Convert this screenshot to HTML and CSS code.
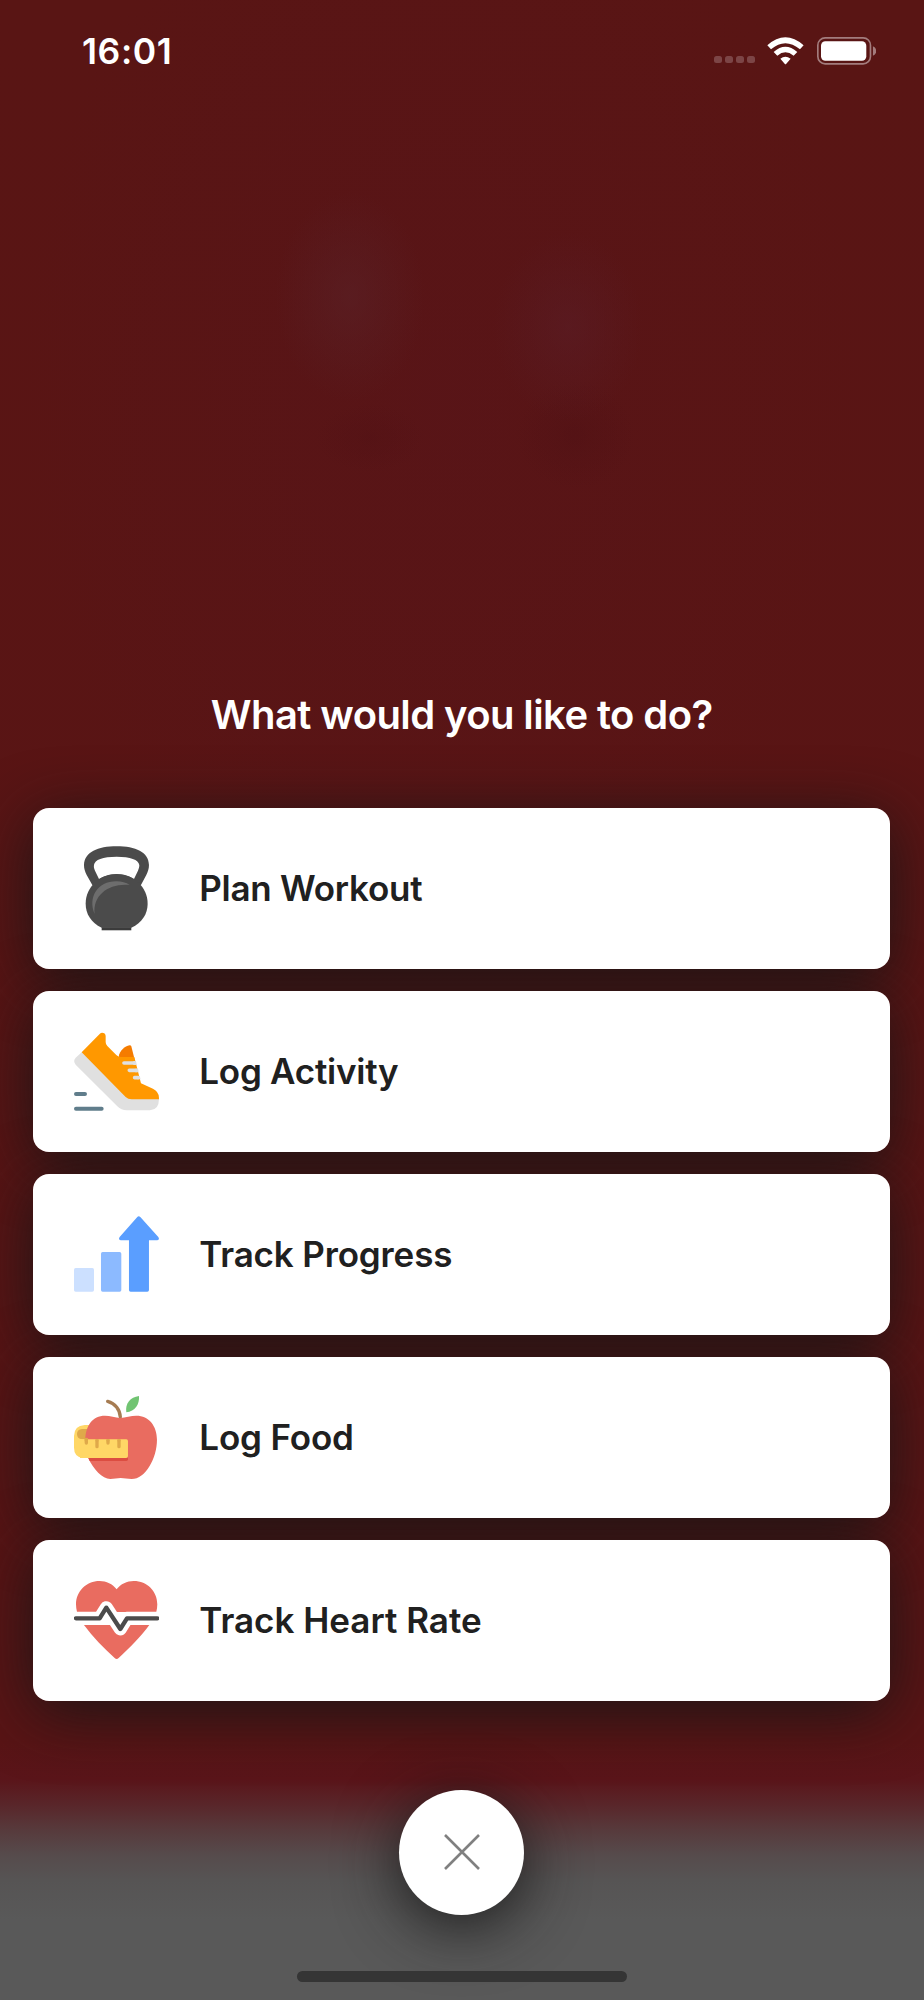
FILE: index.html
```
<!DOCTYPE html>
<html lang="en">
<head>
    <meta charset="UTF-8">
    <meta name="viewport" content="width=device-width, initial-scale=1.0">
    <title>What would you like to do?</title>
    <link rel="stylesheet" href="styles.css">
</head>
<body>
    <div class="screen">
        <header class="status-bar">
            <span class="time">16:01</span>
            <div class="status-icons">
                <div class="signal"><i></i><i></i><i></i><i></i></div>
                <svg class="wifi" viewBox="202 49 112 83">
                    <path fill="#fff" d="M203 74Q257 26 312 74L301 86Q257 49 214 86ZM222 94Q257 63 293 94L282 105Q257 84 233 105ZM242 114Q257 102 273 114L260 129Q257 132 255 129Z"/>
                </svg>
                <svg class="battery" viewBox="350 49 178 83">
                    <rect x="352.5" y="51.5" width="158" height="78" rx="22" fill="none" stroke="#a37c7d" stroke-width="5"/>
                    <rect x="362" y="62" width="136" height="58" rx="13" fill="#fff"/>
                    <path fill="#a37c7d" d="M518 77Q528 81 528 91Q528 101 518 105Z"/>
                </svg>
            </div>
        </header>

        <main class="menu">
            <h1 class="title">What would you like to do?</h1>
            <ul class="actions">
                <li class="card">
                    <svg class="icon" viewBox="42 47 256 256">
                        <path fill="#4b4b4b" fill-rule="evenodd" d="M97 164L80 134C75 124 72 115 72 104C74 65 113 48 170 48C227 48 266 65 267 104C267 115 264 124 259 134L243 164ZM117 146L105 121C102 114 101 110 102 104C104 88 128 79 170 79C211 79 236 88 238 104C238 110 237 114 234 121L222 146Q170 118 117 146Z"/>
                        <path fill="#4b4b4b" d="M170 131C221 131 263 170 263 220C263 250 247 277 214 292H125C93 277 77 250 77 220C77 170 119 131 170 131Z"/>
                        <path fill="#3b3b3b" d="M125 291H214V300H125Z"/>
                        <path fill="#6d6d6d" d="M104 251C83 202 112 153 169 153Q193 153 209 164C148 158 98 193 104 251Z"/>
                    </svg>
                    <span class="label plan">Plan Workout</span>
                </li>
                <li class="card">
                    <svg class="icon" viewBox="42 41 256 256">
                        <path fill="#e0e0e0" d="M65 111L47 127Q38 137 47 148L172 273Q184 285 200 285H270Q297 284 297 251L210 242Z"/>
                        <path fill="#f57c00" d="M176 124C180 105 194 93 209 90Q213 90 214 93L226 140Z"/>
                        <path fill="#ff9800" d="M65 111L119 56Q125 49 133 54Q137 57 137 62V80Q137 87 142 92L169 119Q175 125 182 125H223L243 204L279 220Q297 229 297 247V252H215Q204 252 197 245Z"/>
                        <path fill="none" stroke="#e0e0e0" stroke-width="11" stroke-linecap="round" d="M192 143H224M208 165H230M224 187H235"/>
                        <path fill="#e0e0e0" d="M220 137H227L230 149H220ZM226 160H233L236 171H226ZM232 182H239L242 192H232Z"/>
                        <path fill="none" stroke="#607d8b" stroke-width="12" stroke-linecap="round" d="M48 236H75M48 280H125"/>
                    </svg>
                    <span class="label activity">Log Activity</span>
                </li>
                <li class="card">
                    <svg class="icon" viewBox="42 36 256 256">
                        <rect x="42" y="204" width="60" height="71" rx="5" fill="#cce0ff"/>
                        <rect x="123" y="156" width="61" height="119" rx="5" fill="#8cbaff"/>
                        <path fill="#5a9eff" d="M232 51Q236 47 241 51L295 111Q300 119 292 121H267V270Q267 275 262 275H212Q207 275 207 270V121H182Q174 119 179 111Z"/>
                    </svg>
                    <span class="label progress">Track Progress</span>
                </li>
                <li class="card">
                    <svg class="icon" viewBox="42 45 256 256">
                        <path fill="#ffd766" d="M74 135H110V234H70Q42 232 42 203V168Q42 137 74 135Z"/>
                        <path fill="#dfa94a" d="M66 147H110V178H66Q51 176 51 162Q51 149 66 147Z"/>
                        <path fill="none" stroke="#a67c52" stroke-width="10" stroke-linecap="round" d="M143 64C166 70 180 89 181 111"/>
                        <path fill="#71c472" d="M199 97C195 71 211 51 237 48C239 74 225 94 199 97Z"/>
                        <path fill="#e96c60" d="M181 114C196 113 213 107 229 107C267 107 291 138 291 179C291 234 257 297 215 297C203 297 193 294 182 294C172 294 162 297 151 297C127 297 100 268 85 234L76 178C77 138 97 107 135 107C150 107 166 113 181 114Z"/>
                        <path fill="#dc4d41" d="M84 232H204V238Q204 243 199 243H89Z"/>
                        <path fill="#ffd766" d="M60 178H199Q204 178 204 183V228Q204 234 198 234H60Z"/>
                        <path fill="none" stroke="#dfa94a" stroke-width="10" stroke-linecap="round" d="M79 178V189M111 183V200M144 183V189M177 183V200"/>
                        <path fill="#dfa94a" d="M74 174H84V184H74ZM106 178H116V184H106ZM139 178H149V184H139ZM172 178H182V184H172Z"/>
                    </svg>
                    <span class="label food">Log Food</span>
                </li>
                <li class="card">
                    <svg class="icon" viewBox="42 39 256 256">
                        <path fill="#e96c60" d="M170 73C182 57 201 48 221 48C262 48 292 79 292 118Q292 128 289 141H51Q48 128 48 118C48 79 79 48 119 48C139 48 158 57 170 73ZM72 180H268C244 213 208 250 176 279Q170 285 164 279C131 249 98 216 72 180Z"/>
                        <path fill="none" stroke="#fff" stroke-width="39" stroke-linejoin="round" d="M48 160H119L139 128L181 192L201 160H292"/>
                        <path fill="none" stroke="#4b4b4b" stroke-width="13" stroke-linecap="round" stroke-linejoin="round" d="M48 160H119L139 128L181 192L201 160H292"/>
                    </svg>
                    <span class="label">Track Heart Rate</span>
                </li>
            </ul>
            <button class="close-btn" type="button" aria-label="Close">
                <svg viewBox="0 0 36 36">
                    <path fill="none" stroke="#808080" stroke-width="2.6" d="M1 1L35 35M35 1L1 35"/>
                </svg>
            </button>
        </main>

        <div class="home-indicator"></div>
    </div>
</body>
</html>
```

FILE: styles.css
```
* {
    margin: 0;
    padding: 0;
    box-sizing: border-box;
}

body {
    font-family: Inter, "Liberation Sans", sans-serif;
    background: #591416;
}

.screen {
    display: flex;
    flex-direction: column;
    align-items: center;
    width: 924px;
    height: 2000px;
    overflow: hidden;
    background:
        radial-gradient(ellipse 75px 105px at 350px 297px, rgba(90, 34, 40, 0.55), transparent),
        radial-gradient(ellipse 75px 95px at 568px 327px, rgba(90, 30, 40, 0.5), transparent),
        radial-gradient(ellipse 60px 55px at 575px 435px, rgba(78, 16, 20, 0.4), transparent),
        radial-gradient(ellipse 55px 35px at 370px 438px, rgba(80, 16, 20, 0.35), transparent),
        radial-gradient(ellipse 420px 600px at 440px 400px, rgba(88, 20, 26, 0.5), transparent),
        linear-gradient(#591514 0, #591415 1740px, #5a151a 1780px, #59262a 1805px, #573a3c 1830px, #564b4c 1855px, #565454 1880px, #595959 1920px, #595959 2000px);
}

.status-bar {
    display: flex;
    justify-content: space-between;
    align-items: center;
    width: 100%;
    height: 102px;
    padding: 0 48px 0 82px;
}

.time {
    font-size: 35.5px;
    font-weight: 600;
    letter-spacing: 0.6px;
    color: #fff;
}

.status-icons {
    display: flex;
    align-items: center;
}

.signal {
    display: flex;
    gap: 3px;
    margin: 17px 12px 0 0;
}

.signal i {
    width: 8px;
    height: 7px;
    border-radius: 2.5px;
    background: #7c4546;
}

.wifi {
    width: 37.3px;
    height: 27.7px;
    margin-right: 12px;
}

.battery {
    width: 59.3px;
    height: 27.7px;
}

.menu {
    display: flex;
    flex-direction: column;
    align-items: center;
    width: 100%;
    padding: 0 34px 0 33.4px;
}

.title {
    margin-top: 588px;
    line-height: 50px;
    font-size: 40px;
    font-weight: 600;
    letter-spacing: -0.6px;
    color: #fff;
    white-space: nowrap;
}

.actions {
    display: flex;
    flex-direction: column;
    gap: 22.5px;
    width: 100%;
    margin-top: 68px;
    list-style: none;
    position: relative;
    z-index: 0;
}

.card {
    display: flex;
    align-items: center;
    gap: 40px;
    height: 160.6px;
    padding: 0 40.6px;
    border-radius: 16px;
    background: #fff;
    position: relative;
}

/* shadow sits behind every card so it never darkens the one above */
.card::before {
    content: "";
    position: absolute;
    inset: 0;
    z-index: -1;
    border-radius: 16px;
    box-shadow: 0 11px 62px rgba(22, 22, 22, 0.92);
}

.icon {
    width: 85.3px;
    height: 85.3px;
    flex: none;
}

.label {
    margin-top: -1px;
    font-size: 35px;
    font-weight: 600;
    color: #202020;
    white-space: nowrap;
}

.label.plan,
.label.activity {
    letter-spacing: -0.25px;
}

.label.progress,
.label.food {
    letter-spacing: -0.15px;
}

.close-btn {
    display: flex;
    align-items: center;
    justify-content: center;
    width: 125px;
    height: 125px;
    margin-top: 89px;
    border: none;
    border-radius: 50%;
    background: #fff;
    box-shadow: 0 11px 62px rgba(22, 22, 22, 0.92);
    cursor: pointer;
}

.close-btn svg {
    width: 36px;
    height: 36px;
}

.home-indicator {
    width: 330px;
    height: 11px;
    margin: auto 0 18px;
    border-radius: 6px;
    background: #353535;
    position: relative;
}
```
